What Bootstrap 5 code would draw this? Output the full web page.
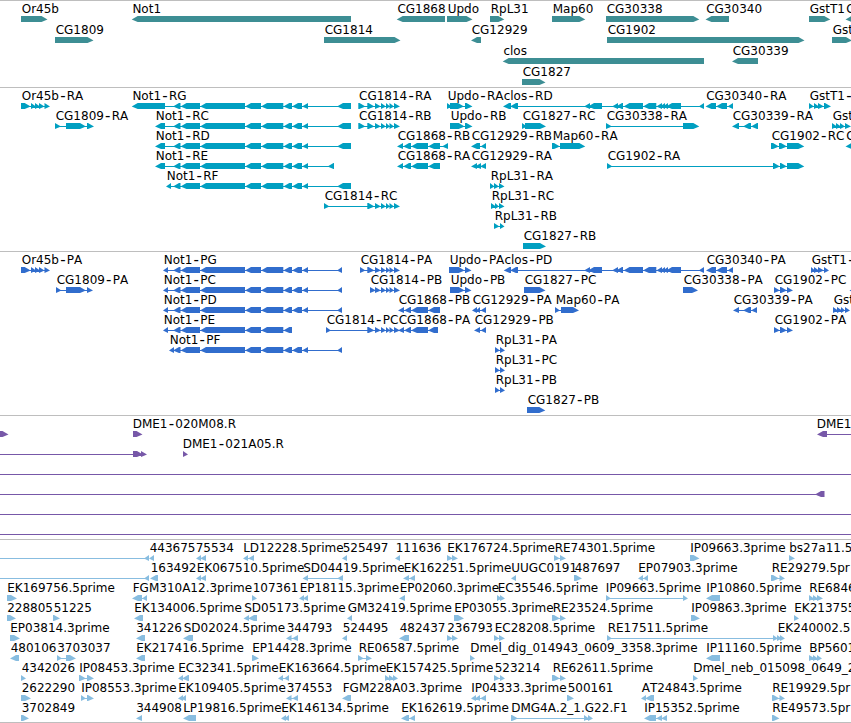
<!DOCTYPE html>
<html lang="en">
<head>
    <meta charset="UTF-8" />
    <title>Genome Browser</title>
    <meta name="viewport" content="width=device-width, initial-scale=1" />
    <link href="https://cdn.jsdelivr.net/npm/bootstrap@5.3.2/dist/css/bootstrap.min.css" rel="stylesheet" />
    <style>
        body {
            font-family: "DejaVu Sans", sans-serif;
            font-size: 12px;
            color: #000;
            background-color: #fff;
        }

        .browser {
            border-bottom: 1px solid #bebebe;
        }

        .track {
            border-top: 1px solid #bebebe;
            padding-bottom: 3px;
        }

        .track-genes,
        .track-ests {
            padding-bottom: 2px;
        }

        .lane {
            height: 20px;
            overflow: visible;
        }

        .track-genes .lane {
            height: 21px;
        }

        .lane text {
            fill: #000;
            font-kerning: none;
        }

        .lane .dash {
            font-size: 15px;
        }

        .track-genes { color: #3d8e94; }
        .track-transcripts { color: #009fc1; }
        .track-proteins { color: #316dcd; }
        .track-clones { color: #7758a8; }
        .track-ests { color: #88bde0; }
    </style>
</head>
<body>
    <main class="browser d-flex flex-column overflow-hidden">
        <section class="track track-genes d-flex flex-column" id="genes"></section>
        <section class="track track-transcripts d-flex flex-column" id="transcripts"></section>
        <section class="track track-proteins d-flex flex-column" id="proteins"></section>
        <section class="track track-clones d-flex flex-column" id="clones"></section>
        <section class="track track-ests d-flex flex-column" id="ests"></section>
    </main>

    <script>
        // exon blocks shared by several isoforms
        const NOT1_A = "173-180.5 180.5-200 200-245 245-261 261-283.3 283.3-292";
        const NOT1 = NOT1_A + " 292-302 302-308";
        const CG1814 = "375-381 381-386 386-390 389.5-394 394-400";
        const CLOS = "584-590 588-602 612-618 616-623 623.5-643 643-656.3 656.3-662 660-665 663-668 666-681 698.7-704";
        const OR45B = "21-30.7 31-36 35-40 39-44.5 44.5-50";
        const CG1902 = "774-780 780-787 787-793";

        // one array per lane, feature = "strand label blocks", "." for no label,
        // label@x moves the label away from the feature start
        const tracks = {
            genes: [
                ["> Or45b 21-47.5", "< Not1 131.7-351", "< CG1868 396.7-445", "> Updo 447-472.5", "> RpL31 490-504.3",
                 "> Map60 552-585.3", "> CG30338 606-699.3", "< CG30340 705.5-729", "> GstT1 809-830.3", "< C 845.5-880"],
                ["> CG1809 55-93.5", "> CG1814 324-400.5", "< CG12929 471-481", "> CG1902 607-804.5", "> Gst 832-852"],
                ["< clos 502.7-704", "< CG30339 732-758"],
                ["> CG1827 522-545.5"]
            ],
            transcripts: [
                [`> Or45b-RA ${OR45B}`, `< Not1-RG 131.7-165 ${NOT1} 337-351`, `> CG1814-RA 358.3-365.5 367.3-374.5 ${CG1814}`,
                 "> Updo-RA 447-452 450-464 465-472.5", `< clos-RD 503-511 510-518 ${CLOS}`,
                 "< CG30340-RA 705.5-716 716-727 727.5-733", "> GstT1- 809-814 814-819 818-824 824-831"],
                ["> CG1809-RA 55-61 66-86 87-94", `< Not1-RC 155-165 ${NOT1} 337-351`, `> CG1814-RB 358.3-365.5 367.3-374.5 ${CG1814}`,
                 "> Updo-RB 450-464.7 465-472.5", "> CG1827-RC 522-527 525-546", "> CG30338-RA 606-612 683-699.3",
                 "< CG30339-RA 732-739 743-751 751-758", "> Gst 832-837 836-841 840-845 845-851"],
                [`< Not1-RD 155-165 ${NOT1} 337-351`, "< CG1868-RB 397-403 403-411 411-428 428-440 442-448",
                 "< CG12929-RB 471-480 480.5-486", "> Map60-RA 552-560 560-585.3", "> CG1902-RC 771-779 779-787 787-804.3",
                 "< C 845.5-880"],
                [`< Not1-RE 155-165 ${NOT1} 327.5-334`, "< CG1868-RA 397-403 403-411 411-428 428-440",
                 "< CG12929-RA 471-477 475-481 480-486", "> CG1902-RA 607-612.5 773-780 780-787 787-804.3"],
                [`< Not1-RF 166-171 ${NOT1} 337-351`, "> RpL31-RA 490-494.5 494-499 499-504.5"],
                [`> CG1814-RC 324-329.5 367.3-374.5 ${CG1814}`, "> RpL31-RC 491-496 495-499 499-504.5"],
                ["> RpL31-RB 494-499.5 500-504.5"],
                ["> CG1827-RB 523-546"]
            ],
            proteins: [
                [`> Or45b-PA ${OR45B}`, `< Not1-PG 163-168 ${NOT1} 337-342`, `> CG1814-PA 360-365.5 367.3-374.5 ${CG1814}`,
                 "> Updo-PA 449-464.7 465-471.5", `< clos-PD 503.7-511 510-518 ${CLOS}`,
                 "< CG30340-PA 706-716 716-727 727.5-733", "> GstT1- 811-815 814-819 818-824 824-829"],
                ["> CG1809-PA 56-61.5 66-86 87-93", `< Not1-PC 163-168 ${NOT1} 337-342`, `> CG1814-PB 370-376 ${CG1814}`,
                 "> Updo-PB 450-464.7 465-471.5", "> CG1827-PC 524-545.5", "> CG30338-PA 683-698", `> CG1902-PC ${CG1902}`,
                 "< . 849.5-880"],
                [`< Not1-PD 163-168 ${NOT1} 337-342`, "< CG1868-PB 398-404 404-411 411-428 428-440",
                 "< CG12929-PA 472-477 476-480 480.5-486", "> Map60-PA 555-560 561-579",
                 "< CG30339-PA 733-739 743-751 751-757", "> Gst 833-838 837-842 841-845 845-850"],
                [`< Not1-PE 163-168 ${NOT1_A}`, `> CG1814-PC 326-331 367.3-374.5 ${CG1814}`,
                 "< CG1868-PA 398-404 404-411 411-428 428-438", "< CG12929-PB 474-480 480.5-486", `> CG1902-PA ${CG1902}`],
                [`< Not1-PF 169-174 ${NOT1} 337-342`, "> RpL31-PA 495-500 500-505"],
                ["> RpL31-PC 495-500 500-505"],
                ["> RpL31-PB 495-500 500-505"],
                ["> CG1827-PB 527-545.3"]
            ],
            clones: [
                ["> . -10-8.5", "> DME1-020M08.R@132 133-142.5", "< DME1@816 817-827 870-880"],
                ["> . -20--15 133-143 141-147", "> DME1-021A05.R@182 183-188"],
                ["> . -20--15 870-880"],
                ["< . -20--15 815-824.5"],
                ["> . -20--15 870-880"],
                ["> . -20--15 870-880"]
            ],
            ests: [
                ["< . -20--15 144-149", "< 443675@149 149-154", "< 75534@195 196-201 200-206", "< LD12228.5prime@242.5 243-248 248-254",
                 "< 525497 342-347", "< 111636 395-400", "> EK176724.5prime@446.5 447-453 452-458", "> RE74301.5prime 554-560 560-566",
                 "> IP09663.3prime@689.5 690-699.5", "> bs27a11.5@788.5 789-795"],
                ["< . -20--15 144-149", "< 163492 150-158", "< EK067510.5prime 196-201 200-206", "< SD04419.5prime 302.5-308 337-343",
                 "< EK162251.5prime 403-409 409-415", "< UUGC0191@510.6 511-516", "> 487697 574-582",
                 "< EP07903.3prime@637.5 638-643 643-648", "> RE29279.5pr 771-779 779.5-785"],
                ["> EK169756.5prime@6.5 7-17", "< FGM310A12.3prime 132-142 142-147", "> 107361 252-257", "< EP18115.3prime 299-304 303-308",
                 "< EP02060.3prime 399-405", "> EC35546.5prime 497-502 500-505", "> IP09663.5prime@605 606-611 683-688",
                 "< IP10860.5prime@705.5 706-720", "> RE6846@808.5 809-814 813-818 817-823"],
                ["> 228805@6.5 7-16", "> 51225 53-60", "< EK134006.5prime@133.5 134-143", "< SD05173.5prime 243.5-249 248-257",
                 "< GM32419.5prime 347-352", "> EP03055.3prime@453.5 454-464", "> RE23524.5prime 552-560 560-566",
                 "> IP09863.3prime@690.5 691-700", "> EK213755@793.5 794-799"],
                ["> EP03814.3prime@9.5 10-20", "< 341226@135.5 136-145", "< SD02024.5prime 183-193", "< 344793 286-291.5 292-298",
                 "< 524495 342-347", "< 482437 399-409", "> 236793@446.5 447-453 452-458", "> EC28208.5prime 494-499.5 499-505",
                 "> RE17511.5prime 607-612 773-778", "> EK240002.5 777-782 780-785"],
                ["< 480106 10-19", "> 3703037@56.5 57-62 66-76", "< EK217416.5prime@135.5 136-145", "> EP14428.3prime@251.5 252-259",
                 "> RE06587.5prime 358-364 366-372", "> Dmel_dig_014943_0609_3358.3prime@469.5 470-475",
                 "< IP11160.5prime@705.5 706-720", "> BP5601@808.5 809-815 813-818 817-822"],
                ["> 4342026 21-26", "> IP08453.3prime@78.5 79-86 87-94", "< EC32341.5prime@177.5 178-183 182-189",
                 "< EK163664.5prime 278-283 284-289", "> EK157425.5prime 385-390 389-394 393-398", "> 523214 494-500 500-505",
                 "> RE62611.5prime 552-560 560-566", "> Dmel_neb_015098_0649_2@692.5 693-698"],
                ["> 2622290 21-31", "> IP08553.3prime@80.5 81-86 87-94", "< EK109405.5prime@177.5 178-183 181-186",
                 "< 374553 286-291.5 292-298", "< FGM228A03.3prime 342-351", "< IP04333.3prime@470.5 471-476 475-480 480-486",
                 "> 500161 567-574", "< AT24843.5prime 641-646 645-654", "> RE19929.5pr@771.5 772-779.5 779.5-785"],
                ["> 3702849 21-29", "< 344908@135.5 136-142", "< LP19816.5prime@182.5 183-196", "< EK146134.5prime@280.5 281-286 284-289",
                 "< EK162619.5prime@400.5 401-409 409-415", "> DMG4A.2_1.G22.F1@510.5 511-518 584-589 588-593",
                 "< IP15352.5prime@643.5 644-656 656-662 661-667", "> RE49573.5pr@771.5 772-779.5"]
            ]
        };

        // gap between the feature start and its label
        const LABEL_OFFSET = 0.7;

        function block(start, end, strand) {
            const head = Math.min(6, end - start);
            if (strand === ">") {
                return `M${start} 15H${end - head}L${end} 18.5L${end - head} 21H${start}Z`;
            }
            return `M${end} 15H${start + head}L${start} 18.5L${start + head} 21H${end}Z`;
        }

        // wide dash between the gene name and the isoform
        function labelText(label) {
            const [name, suffix] = label.split("-");
            if (suffix === undefined) {
                return name;
            }
            return `${name}<tspan class="dash" dx="1.2" dy="0.5">-</tspan><tspan dx="1.2" dy="-0.5">${suffix}</tspan>`;
        }

        function drawFeature(feature) {
            const [strand, name, ...ranges] = feature.split(" ");
            const blocks = ranges.map(r => r.match(/^(-?[\d.]+)-(-?[\d.]+)$/).slice(1).map(Number));
            const start = blocks[0][0];
            const end = blocks[blocks.length - 1][1];
            let out = `<path d="${blocks.map(b => block(b[0], b[1], strand)).join("")}"/>`;
            if (blocks.length > 1) {
                // intron line, kept clear of the pointed ends
                out += `<rect x="${start + 2}" y="18" width="${end - start - 4}" height="1"/>`;
            }
            if (name !== ".") {
                const [label, x] = name.split("@");
                out += `<text x="${Number(x || start) + LABEL_OFFSET}" y="12">${labelText(label)}</text>`;
            }
            return out;
        }

        for (const id in tracks) {
            document.getElementById(id).innerHTML = tracks[id].map(lane =>
                `<svg class="lane w-100 flex-shrink-0" fill="currentColor">${lane.map(drawFeature).join("")}</svg>`
            ).join("");
        }
    </script>

    <script src="https://cdn.jsdelivr.net/npm/bootstrap@5.3.2/dist/js/bootstrap.bundle.min.js"></script>
</body>
</html>
